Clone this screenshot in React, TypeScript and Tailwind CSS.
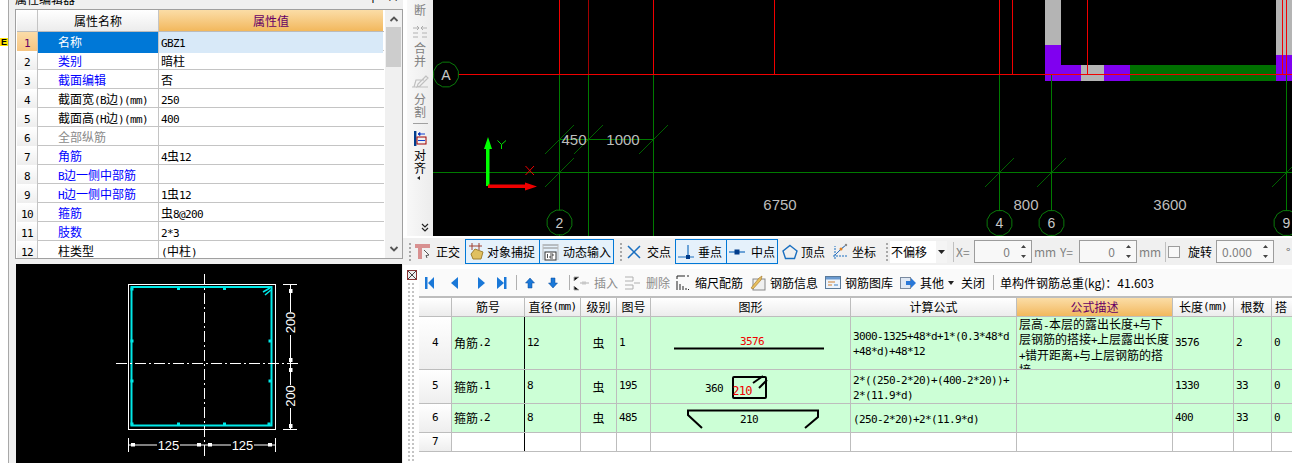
import React from "react";

const CJK = "font-['Noto_Sans_CJK_SC','Noto_Sans_CJK_SC',sans-serif]";

function T({ s }: { s: string }) {
  const runs = s.match(/[\x20-\x7e]+|[^\x20-\x7e]+/g) || [];
  return (
    <>
      {runs.map((r, i) =>
        /^[\x20-\x7e]/.test(r) ? (
          <span key={i} className="font-['DejaVu_Sans_Mono',monospace] text-[11px] tracking-[-0.62px] whitespace-pre">{r}</span>
        ) : (
          <span key={i} className="font-['Noto_Sans_CJK_SC',sans-serif] text-[12px]">{r}</span>
        )
      )}
    </>
  );
}

const rows: [string, string, string, string][] = [
  ["1", "名称", "GBZ1", "sel"],
  ["2", "类别", "暗柱", "blue"],
  ["3", "截面编辑", "否", "blue"],
  ["4", "截面宽(B边)(mm)", "250", "black"],
  ["5", "截面高(H边)(mm)", "400", "black"],
  ["6", "全部纵筋", "", "gray"],
  ["7", "角筋", "4虫12", "blue"],
  ["8", "B边一侧中部筋", "", "blue"],
  ["9", "H边一侧中部筋", "1虫12", "blue"],
  ["10", "箍筋", "虫8@200", "blue"],
  ["11", "肢数", "2*3", "blue"],
  ["12", "柱类型", "(中柱)", "black"],
];

function PropTable() {
  return (
    <div className="flex h-[250px] border border-[#a0a0a0] bg-white overflow-hidden">
      <div className="w-[367px] ml-px shrink-0">
        <div className="grid grid-cols-[21px_121px_224px] h-[22px] border-b border-[#bbbbbb]">
          <div className="bg-gradient-to-b from-white to-[#ececec] border-r border-[#c4c4c4]" />
          <div className="bg-gradient-to-b from-white to-[#ececec] border-r border-[#c4c4c4] flex items-center justify-center text-[12px] text-black"><T s="属性名称" /></div>
          <div className="bg-gradient-to-b from-[#fbdda6] to-[#f2b85c] flex items-center justify-center text-[#660066]"><T s="属性值" /></div>
        </div>
        {rows.map(([n, name, val, kind]) => (
          <div key={n} className="grid grid-cols-[21px_121px_224px] h-[19px] border-b border-[#c4c4c4] leading-[18px]">
            <div className={kind === "sel" ? "bg-gradient-to-b from-[#fbdca8] to-[#f6c27c] border-r border-[#c4c4c4] text-center text-[#660066]" : "bg-gradient-to-b from-white to-[#ececec] border-r border-[#c4c4c4] text-center text-black"}><T s={n} /></div>
            <div className={
              "pl-5 border-r border-[#c4c4c4] whitespace-nowrap overflow-hidden " +
              (kind === "sel" ? "bg-[#0078d7] text-white" : kind === "blue" ? "text-[#0000ff]" : kind === "gray" ? "text-[#8a8a8a]" : "text-black")
            }><T s={name} /></div>
            <div className={"pl-[2px] whitespace-nowrap text-black " + (kind === "sel" ? "bg-[#d8e9f8]" : "")}><T s={val} /></div>
          </div>
        ))}
      </div>
      <div className="ml-[1px] w-[17px] bg-[#f0f0f0] flex flex-col items-center shrink-0">
        <svg width="10" height="17" viewBox="0 0 10 17" className="shrink-0"><path d="M1.5 11 5 7.5 8.5 11" fill="none" stroke="#555" strokeWidth="1.8" /></svg>
        <div className="w-[15px] h-[40px] bg-[#cdcdcd] shrink-0" />
        <div className="flex-1" />
        <svg width="10" height="17" viewBox="0 0 10 17" className="shrink-0"><path d="M1.5 6 5 9.5 8.5 6" fill="none" stroke="#555" strokeWidth="1.8" /></svg>
      </div>
    </div>
  );
}

function Section() {
  const lab = "font-['Liberation_Sans',sans-serif]";
  return (
    <svg className="block" width="386" height="199" viewBox="16 264 386 199">
      <rect x="16" y="264" width="386" height="199" fill="#000" />
      <rect x="128.5" y="284.5" width="147" height="145" fill="none" stroke="#fff" />
      <rect x="131.5" y="287" width="140" height="138.5" fill="none" stroke="#00e8e8" strokeWidth="2" />
      <path d="M263 292 270 288M265 295 271 290" stroke="#00e8e8" strokeWidth="1.6" />
      {[[178.5, 288.5], [224.5, 288.5], [178.5, 424], [224.5, 424], [132, 341], [132, 381], [270, 341], [270, 381], [132, 289], [132, 424], [269, 424]].map(([x, y], i) => (
        <rect key={i} x={x - 1.5} y={y - 1.5} width="3" height="3" fill="#00e8e8" />
      ))}
      <path d="M204.5 274V457" stroke="#fff" strokeDasharray="11 3 2 3" />
      <path d="M116 363.5H299" stroke="#fff" strokeDasharray="11 3 2 3" />
      <path d="M283 284.5H297M283 429.5H297M290.5 284.5V312M290.5 335V385M290.5 408V429.5" stroke="#fff" />
      <path d="M128.5 438V452M275.5 438V452M128.5 445H157M180 445H231M254 445H275.5" stroke="#fff" />
      {[[289, 289], [289, 358], [289, 368], [289, 424]].map(([x, y], i) => (
        <rect key={i} x={x} y={y} width="3.5" height="4" fill="#fff" />
      ))}
      {[[131, 443], [197, 443], [208, 443], [268, 443]].map(([x, y], i) => (
        <rect key={i} x={x} y={y} width="4" height="3.5" fill="#fff" />
      ))}
      <text x="168.5" y="450" textAnchor="middle" fill="#fff" fontSize="13" className={lab}>125</text>
      <text x="242.5" y="450" textAnchor="middle" fill="#fff" fontSize="13" className={lab}>125</text>
      <text transform="translate(295 322.5) rotate(-90)" textAnchor="middle" fill="#fff" fontSize="13" className={lab}>200</text>
      <text transform="translate(295 396) rotate(-90)" textAnchor="middle" fill="#fff" fontSize="13" className={lab}>200</text>
    </svg>
  );
}

function Oct({ cx, cy, t }: { cx: number; cy: number; t: string }) {
  const r = 12.8;
  const pts = Array.from({ length: 12 }, (_, i) => {
    const a = (i * Math.PI) / 6 + 0.26;
    return `${cx + r * Math.cos(a)},${cy + r * Math.sin(a)}`;
  }).join(" ");
  return (
    <g>
      <polygon points={pts} fill="#000" stroke="#0a7a0a" />
      <text x={cx} y={cy + 5} textAnchor="middle" fontSize="14" fill="#c8c8c8" className="font-['Liberation_Sans',sans-serif]">{t}</text>
    </g>
  );
}

function Cad() {
  const g = "#007a00";
  const r = "#f00000";
  const tick = (x: number, y: number) => <path key={`${x}-${y}`} d={`M${x - 14.5} ${y + 14.5}L${x + 14.5} ${y - 14.5}`} stroke={g} strokeWidth="0.8" />;
  const lab = "font-['Liberation_Sans',sans-serif]";
  return (
    <svg className="block" width="859" height="236" viewBox="433 0 859 236">
      <rect x="433" y="0" width="859" height="236" fill="#000" />
      <rect x="1045" y="0" width="16" height="45" fill="#b4b4b4" />
      <rect x="1045" y="45" width="16" height="20" fill="#8000f0" />
      <rect x="1045" y="65" width="36" height="16" fill="#8000f0" />
      <rect x="1081" y="65" width="23" height="16" fill="#b4b4b4" />
      <rect x="1104" y="65" width="26" height="16" fill="#8000f0" />
      <rect x="1130" y="65" width="146" height="16" fill="#007000" />
      <rect x="1276" y="0" width="16" height="55" fill="#b4b4b4" />
      <rect x="1276" y="55" width="16" height="26" fill="#8000f0" />
      <path d="M559.5 74V236M653.5 74V236M999.5 74V236M1051.5 74V236M1286.5 74V236" stroke={g} />
      <path d="M588.5 74V236" stroke={g} />
      <path d="M433 172.5H1292M559.5 139.5H653.5" stroke={g} />
      <path d="M559.5 0V74M653.5 0V74M774.5 0V74M999.5 0V74M1012.5 0V74M1087.5 0V74M1282.5 0V74M1286.5 0V74" stroke={r} />
      <path d="M588.5 0V74" stroke="#a00000" />
      <path d="M433 74.5H1292" stroke={r} />
      {tick(559.5, 172.5)}{tick(559.5, 139.5)}{tick(588.5, 139.5)}{tick(653.5, 139.5)}{tick(999.5, 172.5)}{tick(1051.5, 172.5)}{tick(1286.5, 172.5)}
      <Oct cx={446} cy={74.5} t="A" />
      <Oct cx={559.5} cy={222.5} t="2" />
      <Oct cx={999.5} cy={223} t="4" />
      <Oct cx={1051.5} cy={223} t="6" />
      <Oct cx={1286.5} cy={223} t="9" />
      {[["450", 574, 145], ["1000", 623, 145], ["6750", 780, 210], ["800", 1026, 210], ["3600", 1170, 210]].map(([t, x, y]) => (
        <text key={t as string} x={x as number} y={y as number} textAnchor="middle" fontSize="15" fill="#bdbdbd" className={lab}>{t}</text>
      ))}
      <rect x="486" y="147" width="3.5" height="39" fill="#00ff00" />
      <path d="M488 137 484 149H492Z" fill="#00ff00" />
      <rect x="488" y="184.5" width="40" height="3.5" fill="#f00000" />
      <path d="M537 186.5 525 182.5V190.5Z" fill="#f00000" />
      <path d="M497.5 140.5 501.5 144.5 506 140.5M501.5 144.5V149" stroke="#00e000" fill="none" />
      <path d="M525.5 166 534 175M534 166 525.5 175" stroke="#f00000" />
    </svg>
  );
}

function VText({ s, gray }: { s: string; gray?: boolean }) {
  return (
    <div className={"text-[12px] leading-[12.5px] text-center " + CJK + (gray ? " text-[#808080]" : " text-black")}>
      {s.split("").map((c, i) => <div key={i}>{c}</div>)}
    </div>
  );
}

function SideBar() {
  return (
    <div className="w-[26px] h-[236px] bg-gradient-to-r from-[#f8f8f8] to-[#ececec] flex flex-col items-center overflow-hidden shrink-0 ml-[4px]">
      <div className="h-[16px] overflow-hidden flex flex-col justify-end mt-0"><VText s="断" gray /></div>
      <svg width="18" height="14" viewBox="0 0 18 14" className="mt-[9px] shrink-0"><path d="M2 3H7M16 3H11M2 8H7M11 8H16M2 12H7M11 12H16" stroke="#c8c8c8" strokeWidth="1.4" /><path d="M6 1 8 3 6 5M12 1 10 3 12 5" stroke="#aaa" fill="none" /></svg>
      <div className="mt-[3px]"><VText s="合并" gray /></div>
      <svg width="18" height="16" viewBox="0 0 18 16" className="mt-[7px] shrink-0"><path d="M1 13H17M3 13 5 6H13M15 2 7 10 6 13 9 12 17 4Z" stroke="#c0c0c0" fill="none" strokeWidth="1.2" /></svg>
      <div className="mt-[3px]"><VText s="分割" gray /></div>
      <div className="w-[15px] h-px bg-[#a0a0a0] mt-[5px] shrink-0" />
      <svg width="14" height="15" viewBox="0 0 14 15" className="mt-[7px] shrink-0"><rect x="1" y="0" width="2.4" height="15" fill="#003c8c" /><rect x="4" y="6" width="9" height="7" fill="none" stroke="#a00000" /><path d="M5 9.5H12" stroke="#1040d0" /><path d="M5 3H12M5 3 7 1.5V4.5Z" stroke="#1040d0" /></svg>
      <div className="mt-[3px]"><VText s="对齐" /></div>
      <svg width="8" height="6" viewBox="0 0 8 6" className="mt-[1px] mr-[2px] shrink-0"><path d="M5 1 2 3 5 5Z" fill="#222" /></svg>
      <div className="flex-1" />
      <svg width="10" height="10" viewBox="0 0 10 10" className="mb-[3px] ml-[10px] shrink-0"><path d="M2 1 5 4 8 1M2 5 5 8 8 5" stroke="#222" fill="none" strokeWidth="1.2" /></svg>
    </div>
  );
}

const S = ({ className = "", children }: { className?: string; children?: React.ReactNode }) => (
  <span className={"text-[12px] whitespace-nowrap " + CJK + " " + className}>{children}</span>
);

function Grip({ className = "" }: { className?: string }) {
  return <div className={"w-[4px] h-[20px] shrink-0 bg-[radial-gradient(#a8a8a8_1px,transparent_1.3px)] bg-[length:4px_4px] " + className} />;
}

function NumInput({ value, className = "" }: { value: string; className?: string }) {
  return (
    <div className={"h-[23px] border border-[#9c9c9c] bg-[#f8f8f8] flex items-center justify-end shrink-0 " + className}>
      <S className="text-[#808080]">{value}</S>
      <svg width="15" height="19" viewBox="0 0 15 19" className="ml-[6px]"><path d="M5 6 7.5 3 10 6ZM5 13 7.5 16 10 13Z" fill="#444" /></svg>
    </div>
  );
}

function SnapBar() {
  const blue = "border border-[#0078d7] bg-[#e5f1fb] h-[25px] flex items-center shrink-0";
  return (
    <div className="h-[27px] mt-[2px] bg-[#f0f0f0] flex items-center pl-[5px] overflow-hidden">
      <Grip />
      <svg width="16" height="17" viewBox="0 0 16 17" className="ml-[3px] shrink-0"><path d="M0 3H15M5 3V16" stroke="#d89090" strokeWidth="4" /><path d="M9 7 14 12 11 12.5 12 15" stroke="#555" fill="#fff" /></svg>
      <S className="ml-[5px] w-[28px] text-black">正交</S>
      <div className={blue + " w-[75px] ml-[1px]"}>
        <svg width="17" height="19" viewBox="0 0 17 19" className="ml-[2px]"><path d="M1 4H14M4 1V8M11 1V8" stroke="#a04030" /><path d="M3 12 7 7 15 10 13 17 5 17Z" fill="#e0c060" stroke="#a08030" /></svg>
        <S className="ml-[2px] text-black">对象捕捉</S>
      </div>
      <div className={blue + " w-[75px] -ml-px"}>
        <svg width="17" height="18" viewBox="0 0 17 18" className="ml-[2px]"><path d="M1 2H16M1 5H16" stroke="#888" /><path d="M1 1V17M16 1V17" stroke="#bbb" /><rect x="3" y="9" width="11" height="8" fill="#fff" stroke="#333" /><path d="M5.5 11V15M8 11H11V13H8V15H11" stroke="#222" fill="none" strokeWidth="0.8" /></svg>
        <S className="ml-[4px] text-black">动态输入</S>
      </div>
      <Grip className="ml-[5px]" />
      <svg width="16" height="16" viewBox="0 0 16 16" className="ml-[3px] shrink-0"><path d="M2 2 14 14M14 2 2 14" stroke="#1a6fc0" strokeWidth="1.5" /></svg>
      <S className="ml-[5px] w-[28px] text-black">交点</S>
      <div className={blue + " w-[52px]"}>
        <svg width="18" height="18" viewBox="0 0 18 18" className="ml-[1px]"><path d="M1 14H17M11 2V14" stroke="#1a6fc0" strokeWidth="1.2" /><rect x="9" y="12" width="4" height="4" fill="#003c8c" /></svg>
        <S className="ml-[3px] text-black">垂点</S>
      </div>
      <div className={blue + " w-[52px] -ml-px"}>
        <svg width="18" height="10" viewBox="0 0 18 10" className="ml-[1px]"><path d="M1 5H17" stroke="#1a6fc0" strokeWidth="1.2" /><rect x="6.5" y="2.5" width="5" height="5" fill="#003c8c" /></svg>
        <S className="ml-[5px] text-black">中点</S>
      </div>
      <svg width="16" height="16" viewBox="0 0 16 16" className="ml-[4px] shrink-0"><path d="M8 1.5 15 7 12.5 14.5H3.5L1 7Z" fill="none" stroke="#1a6fc0" strokeWidth="1.4" /></svg>
      <S className="ml-[3px] w-[28px] text-black">顶点</S>
      <svg width="17" height="17" viewBox="0 0 17 17" className="ml-[3px] shrink-0"><path d="M3 16V3M1 13H16" stroke="#1a6fc0" strokeDasharray="2 1" /><path d="M3 12 9 6 14 2" stroke="#2a70c0" /><circle cx="9" cy="6" r="1.5" fill="#e08020" /><circle cx="14" cy="2" r="1.2" fill="#888" /></svg>
      <S className="ml-[3px] w-[28px] text-black">坐标</S>
      <Grip className="ml-[5px]" />
      <div className="ml-[1px] w-[57px] h-[22px] bg-white flex items-center shrink-0 relative">
        <S className="ml-[1px] text-black">不偏移</S>
        <div className="ml-auto w-[11px] h-full bg-[#f4f4f4] flex items-center justify-center">
          <svg width="7" height="4" viewBox="0 0 7 4"><path d="M0 0H7L3.5 4Z" fill="#222" /></svg>
        </div>
      </div>
      <div className="w-px h-[20px] bg-[#c0c0c0] ml-[6px] shrink-0" />
      <S className="ml-[2px] w-[18px] text-[#808080]">X=</S>
      <NumInput value="0" className="w-[58px]" />
      <S className="ml-[2px] w-[26px] text-[#808080]">mm</S>
      <S className="w-[19px] text-[#808080]">Y=</S>
      <NumInput value="0" className="w-[58px]" />
      <S className="ml-[2px] w-[26px] text-[#808080]">mm</S>
      <div className="w-px h-[20px] bg-[#c0c0c0] shrink-0" />
      <div className="ml-[2px] w-[12px] h-[12px] border border-[#9c9c9c] bg-[#f8f8f8] shrink-0" />
      <S className="ml-[8px] w-[28px] text-black">旋转</S>
      <NumInput value="0.000" className="w-[58px]" />
      <S className="ml-[12px] text-[#666]">°</S>
    </div>
  );
}

function Ic({ children, w = 16, h = 16, className = "" }: { children: React.ReactNode; w?: number; h?: number; className?: string }) {
  return <svg width={w} height={h} viewBox={`0 0 ${w} ${h}`} className={"shrink-0 " + className}>{children}</svg>;
}

function ActionBar() {
  const navBlue = "#1a78d8";
  return (
    <div className="h-[27px] flex items-center bg-[#fafafa] pl-[6px] overflow-hidden">
      <Ic w={10} h={14}><rect x="0" y="1" width="2.5" height="12" fill={navBlue} /><path d="M9 1V13L3 7Z" fill={navBlue} /></Ic>
      <Ic w={8} h={14} className="ml-[16px]"><path d="M7 1V13L0 7Z" fill={navBlue} /></Ic>
      <Ic w={8} h={14} className="ml-[18px]"><path d="M1 1V13L8 7Z" fill={navBlue} /></Ic>
      <Ic w={10} h={14} className="ml-[12px]"><path d="M0 1V13L7 7Z" fill={navBlue} /><rect x="7" y="1" width="2.5" height="12" fill={navBlue} /></Ic>
      <div className="w-px h-[15px] bg-[#b0b0b0] ml-[9px] shrink-0" />
      <Ic w={10} h={12} className="ml-[8px]"><path d="M5 1 9.5 6H7V11H3V6H.5Z" fill={navBlue} stroke="#0a4a9a" strokeWidth="0.5" /></Ic>
      <Ic w={10} h={12} className="ml-[13px]"><path d="M5 11 9.5 6H7V1H3V6H.5Z" fill={navBlue} stroke="#0a4a9a" strokeWidth="0.5" /></Ic>
      <div className="w-px h-[15px] bg-[#b0b0b0] ml-[11px] shrink-0" />
      <Ic w={17} h={16} className="ml-[3px]"><path d="M6 2H1V6M1 11V15H6M7 8H16" stroke="#b0b0b0" /><rect x="9" y="6.5" width="4" height="3" fill="#c8c8c8" /></Ic>
      <S className="ml-[4px] w-[26px] text-[#8c8c8c]">插入</S>
      <Ic w={17} h={16} className="ml-[4px]"><path d="M1 2H9V6H1M1 10H9V14H1M10 8H16" stroke="#b0b0b0" fill="none" /></Ic>
      <S className="ml-[5px] w-[26px] text-[#8c8c8c]">删除</S>
      <Ic w={14} h={16} className="ml-[4px]"><path d="M1 1H9M1 1V4M13 1H11M1 6V15M4 9V15M7 11V15M10 13V15M12.5 14V15" stroke="#222" /></Ic>
      <S className="ml-[5px] w-[50px] text-black">缩尺配筋</S>
      <Ic w={16} h={16} className="ml-[5px]"><rect x="3" y="4" width="12" height="11" fill="#f0f0f0" stroke="#888" /><path d="M1 13 9 3 12 1 11 5 3 14Z" fill="#e8c060" stroke="#a07020" strokeWidth="0.6" /></Ic>
      <S className="ml-[4px] w-[50px] text-black">钢筋信息</S>
      <Ic w={16} h={13} className="ml-[5px]"><rect x=".5" y=".5" width="15" height="12" fill="#eef4fb" stroke="#5a7a9a" /><rect x="1" y="1" width="14" height="2.5" fill="#6a9ad0" /><path d="M3 6H10M3 9H7" stroke="#d08030" /><path d="M9 9H13" stroke="#4080c0" /></Ic>
      <S className="ml-[4px] w-[51px] text-black">钢筋图库</S>
      <Ic w={17} h={14} className="ml-[4px]"><rect x=".5" y="1.5" width="10" height="11" fill="#dfe8f4" stroke="#7a8aa0" /><path d="M6 5H11V2L16 7 11 12V9H6Z" fill="#2a78d8" /></Ic>
      <S className="ml-[3px] w-[25px] text-black">其他</S>
      <Ic w={6} h={4} className="ml-[3px]"><path d="M0 0H6L3 4Z" fill="#222" /></Ic>
      <S className="ml-[7px] w-[26px] text-black">关闭</S>
      <div className="w-px h-[15px] bg-[#b0b0b0] ml-[6px] shrink-0" />
      <S className="ml-[6px] text-black font-['Noto_Sans_CJK_SC','Noto_Sans',sans-serif]">单构件钢筋总重(kg)：41.603</S>
    </div>
  );
}

const COLS = "grid grid-cols-[33px_73px_56px_36px_34px_200px_166px_156px_61px_38px_20px]";
const cb = "border-r border-[#bdbdbd] overflow-hidden";

function Figure1() {
  return (
    <svg width="200" height="52" viewBox="0 0 200 52" className="block">
      <path d="M23 31.5H173" stroke="#000" strokeWidth="2" />
      <text x="101" y="28" textAnchor="middle" fill="#f00000" fontSize="11" letterSpacing="-0.6" className="font-['DejaVu_Sans_Mono',monospace]">3576</text>
    </svg>
  );
}
function Figure2() {
  return (
    <svg width="200" height="33" viewBox="0 0 200 33" className="block">
      <rect x="82" y="7" width="33" height="21" rx="1" fill="none" stroke="#000" strokeWidth="2" />
      <path d="M102 13 112 6M108 18 116 10" stroke="#000" strokeWidth="2" fill="none" />
      <text x="63" y="22" textAnchor="middle" fill="#000" fontSize="11" letterSpacing="-0.6" className="font-['DejaVu_Sans_Mono',monospace]">360</text>
      <text x="91" y="25" textAnchor="middle" fill="#f00000" fontSize="12" letterSpacing="-0.8" className="font-['DejaVu_Sans_Mono',monospace]">210</text>
    </svg>
  );
}
function Figure3() {
  return (
    <svg width="200" height="28" viewBox="0 0 200 28" className="block">
      <path d="M51 24 37 11V6.5H167V13L154 24" fill="none" stroke="#000" strokeWidth="2" />
      <text x="98" y="19" textAnchor="middle" fill="#000" fontSize="11" letterSpacing="-0.6" className="font-['DejaVu_Sans_Mono',monospace]">210</text>
    </svg>
  );
}

function DataRow({ n, h, name, d, g, no, fig, formula, desc, len, cnt, da, green = true }: any) {
  const c = cb + " " + (green ? "bg-[#ccffd6]" : "bg-white");
  return (
    <div className={COLS + " border-b border-[#bdbdbd] " + h}>
      <div className={cb + " bg-gradient-to-b from-white to-[#eeeeee] flex items-center justify-center"}><T s={n} /></div>
      <div className={c + " flex items-center pl-[2px] border-r-black"}><T s={name} /></div>
      <div className={c + " flex items-center pl-[2px]"}><T s={d} /></div>
      <div className={c + " flex items-center justify-center"}><T s={g} /></div>
      <div className={c + " flex items-center pl-[2px]"}><T s={no} /></div>
      <div className={c}>{fig}</div>
      <div className={c + " flex items-center pl-[2px] leading-[13px]"}><div>{formula}</div></div>
      <div className={c + " pl-[2px] leading-[12.4px]"}>{desc}</div>
      <div className={c + " flex items-center pl-[2px]"}><T s={len} /></div>
      <div className={c + " flex items-center pl-[2px]"}><T s={cnt} /></div>
      <div className={(green ? "bg-[#ccffd6]" : "bg-white") + " flex items-center pl-[2px] overflow-hidden"}><T s={da} /></div>
    </div>
  );
}

function Line({ s }: { s: string }) {
  return <div className="whitespace-nowrap"><T s={s} /></div>;
}

function BottomTable() {
  const hc = "bg-gradient-to-b from-white to-[#ececec] " + cb + " flex items-center justify-center";
  return (
    <div className="border-t-2 border-[#bdbdbd] bg-white flex-1 overflow-hidden">
      <div className={COLS + " h-[19px] border-b border-[#bdbdbd]"}>
        <div className={hc} />
        <div className={hc}><T s="筋号" /></div>
        <div className={hc + " whitespace-nowrap"}><T s="直径(mm)" /></div>
        <div className={hc}><T s="级别" /></div>
        <div className={hc}><T s="图号" /></div>
        <div className={hc}><T s="图形" /></div>
        <div className={hc}><T s="计算公式" /></div>
        <div className={"bg-gradient-to-b from-[#fbdda6] to-[#f2b85c] border-r border-[#bdbdbd] flex items-center justify-center text-[#660066]"}><T s="公式描述" /></div>
        <div className={hc + " whitespace-nowrap"}><T s="长度(mm)" /></div>
        <div className={hc}><T s="根数" /></div>
        <div className="bg-gradient-to-b from-white to-[#ececec] flex items-center overflow-hidden pl-[3px]"><T s="搭" /></div>
      </div>
      <DataRow n="4" h="h-[53px]" name="角筋.2" d="12" g="虫" no="1" fig={<Figure1 />} len="3576" cnt="2" da="0"
        formula={<><Line s="3000-1325+48*d+1*(0.3*48*d" /><Line s="+48*d)+48*12" /></>}
        desc={<><Line s="层高-本层的露出长度+与下" /><Line s="层钢筋的搭接+上层露出长度" /><Line s="+错开距离+与上层钢筋的搭" /><Line s="接" /></>} />
      <DataRow n="5" h="h-[34px]" name="箍筋.1" d="8" g="虫" no="195" fig={<Figure2 />} len="1330" cnt="33" da="0"
        formula={<><Line s="2*((250-2*20)+(400-2*20))+" /><Line s="2*(11.9*d)" /></>} desc="" />
      <DataRow n="6" h="h-[29px]" name="箍筋.2" d="8" g="虫" no="485" fig={<Figure3 />} len="400" cnt="33" da="0"
        formula={<Line s="(250-2*20)+2*(11.9*d)" />} desc="" />
      <DataRow n="7" h="h-[19px]" name="" d="" g="" no="" fig={null} len="" cnt="" da="" formula={null} desc="" green={false} />
    </div>
  );
}

export default function App() {
  return (
    <div className="w-[1292px] h-[463px] overflow-hidden bg-white flex">
      {/* far-left dock strip */}
      <div className="w-[15px] shrink-0 flex">
        <div className="w-[9px] bg-white border-r border-[#a8a8a8] flex flex-col">
          <div className="mt-[38px] w-[8px] h-[8px] bg-[#ffe400] text-[9px] leading-[8px] font-bold text-black font-['Liberation_Sans',sans-serif] text-center">E</div>
        </div>
        <div className="w-[6px] bg-[#f0f0f0]" />
      </div>
      {/* property panel */}
      <div className="w-[388px] shrink-0 flex flex-col bg-[#f0f0f0]">
        <div className="h-[9px] overflow-hidden relative flex justify-between pr-[4px]">
          <div className="-mt-[14px] text-black whitespace-nowrap"><T s="属性编辑器" /></div>
          <div className="-mt-[12px] flex gap-[8px] text-black"><T s="中" /><T s="×" /></div>
        </div>
        <PropTable />
        <div className="h-[5px]" />
        <div className="pl-px"><Section /></div>
      </div>
      {/* right side */}
      <div className="flex-1 flex flex-col min-w-0 bg-white">
        <div className="flex">
          <SideBar />
          <Cad />
        </div>
        <SnapBar />
        <div className="flex flex-1 min-h-0 mt-[4px]">
          <div className="w-[12px] ml-[4px] shrink-0 flex flex-col items-start">
            <svg width="10" height="10" viewBox="0 0 10 10" className="shrink-0 mt-[1px]"><rect x=".5" y=".5" width="9" height="9" fill="#eee" stroke="#883333" /><path d="M1 1 9 9M9 1 1 9" stroke="#444" /></svg>
            <div className="w-[8px] flex-1 mt-[2px] bg-[radial-gradient(#c4c4c4_1px,transparent_1.3px)] bg-[length:4px_4px]" />
          </div>
          <div className="flex-1 min-w-0 flex flex-col">
            <ActionBar />
            <BottomTable />
          </div>
        </div>
      </div>
    </div>
  );
}
